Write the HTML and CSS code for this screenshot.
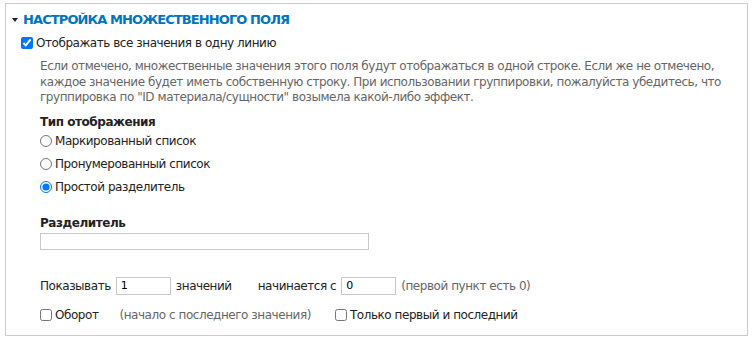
FILE: index.html
```html
<!DOCTYPE html>
<html lang="ru">
<head>
  <meta charset="UTF-8">
  <title>Настройка множественного поля</title>
  <link rel="stylesheet" href="styles.css">
</head>
<body>
  <div class="fieldset">
    <div class="legend"><span class="arrow"></span>Настройка множественного поля</div>
    <div class="content">
      <label class="check-row">
        <input type="checkbox" checked> Отображать все значения в одну линию
      </label>
      <div class="sub">
        <p class="description">Если отмечено, множественные значения этого поля будут отображаться в одной строке. Если же не отмечено, каждое значение будет иметь собственную строку. При использовании группировки, пожалуйста убедитесь, что группировка по "ID материала/сущности" возымела какой-либо эффект.</p>

        <div class="group-title">Тип отображения</div>
        <label class="radio-row"><input type="radio" name="type"> Маркированный список</label>
        <label class="radio-row"><input type="radio" name="type"> Пронумерованный список</label>
        <label class="radio-row"><input type="radio" name="type" checked> Простой разделитель</label>

        <div class="group-title sep-title">Разделитель</div>
        <input type="text" class="sep-input">

        <div class="inline-row">
          <span>Показывать</span>
          <input type="text" class="small-input" value="1">
          <span>значений</span>
          <span class="gap">начинается с</span>
          <input type="text" class="small-input" value="0">
          <span class="hint">(первой пункт есть 0)</span>
        </div>
        <div class="inline-row last">
          <label class="plain"><input type="checkbox"> Оборот</label>
          <span class="hint wide">(начало с последнего значения)</span>
          <label class="plain"><input type="checkbox"> Только первый и последний</label>
        </div>
      </div>
    </div>
  </div>
</body>
</html>
```

FILE: styles.css
```css
body {
  margin: 0;
  padding: 3px 5px 0 5px;
  background: #fff;
  font-family: "DejaVu Sans", "Noto Sans", sans-serif;
  font-size: 12px;
  letter-spacing: -0.45px;
  color: #222;
}
.fieldset {
  border: 1px solid #ccc;
  height: 333px;
  box-sizing: border-box;
  width: 743px;
}
.legend {
  margin: 8px 0 0 6px;
  color: #0074bd;
  font-weight: bold;
  font-size: 13px;
  text-transform: uppercase;
  display: flex;
  align-items: center;
  letter-spacing: -0.9px;
}
.arrow {
  width: 0;
  height: 0;
  border-left: 3px solid transparent;
  border-right: 3px solid transparent;
  border-top: 4px solid #222;
  margin-right: 5px;
}
.content {
  padding: 0 0 0 15px;
}
label {
  display: flex;
  align-items: center;
}
input[type=checkbox], input[type=radio] {
  width: 12px;
  height: 12px;
  margin: 0 3px 0 0;
}
.check-row {
  margin-top: 8px;
  height: 16px;
}
.sub {
  padding-left: 19px;
}
.description {
  margin: 8px 0 0 0;
  color: #666;
  line-height: 15.5px;
  width: 690px;
}
.group-title {
  font-weight: bold;
  margin-top: 9px;
}
.radio-row {
  margin-top: 7px;
  height: 16px;
}
.group-title + .radio-row {
  margin-top: 4px;
}
.sep-title {
  margin-top: 21px;
}
.sep-input {
  display: block;
  width: 329px;
  height: 17px;
  box-sizing: border-box;
  border: 1px solid #c8c8c8;
  margin: 3px 0 0 0;
  padding: 0 3px;
  font: inherit;
}
.inline-row {
  display: flex;
  align-items: center;
  margin-top: 27px;
  height: 18px;
}
.inline-row.last {
  margin-top: 11px;
}
.small-input {
  width: 55px;
  height: 18px;
  box-sizing: border-box;
  border: 1px solid #c8c8c8;
  margin: 0 5px;
  padding: 0 4px;
  font: inherit;
  font-size: 11px;
}
.gap {
  margin-left: 26px;
}
.hint {
  color: #666;
}
.hint.wide {
  margin: 0 24px 0 21px;
}
```
